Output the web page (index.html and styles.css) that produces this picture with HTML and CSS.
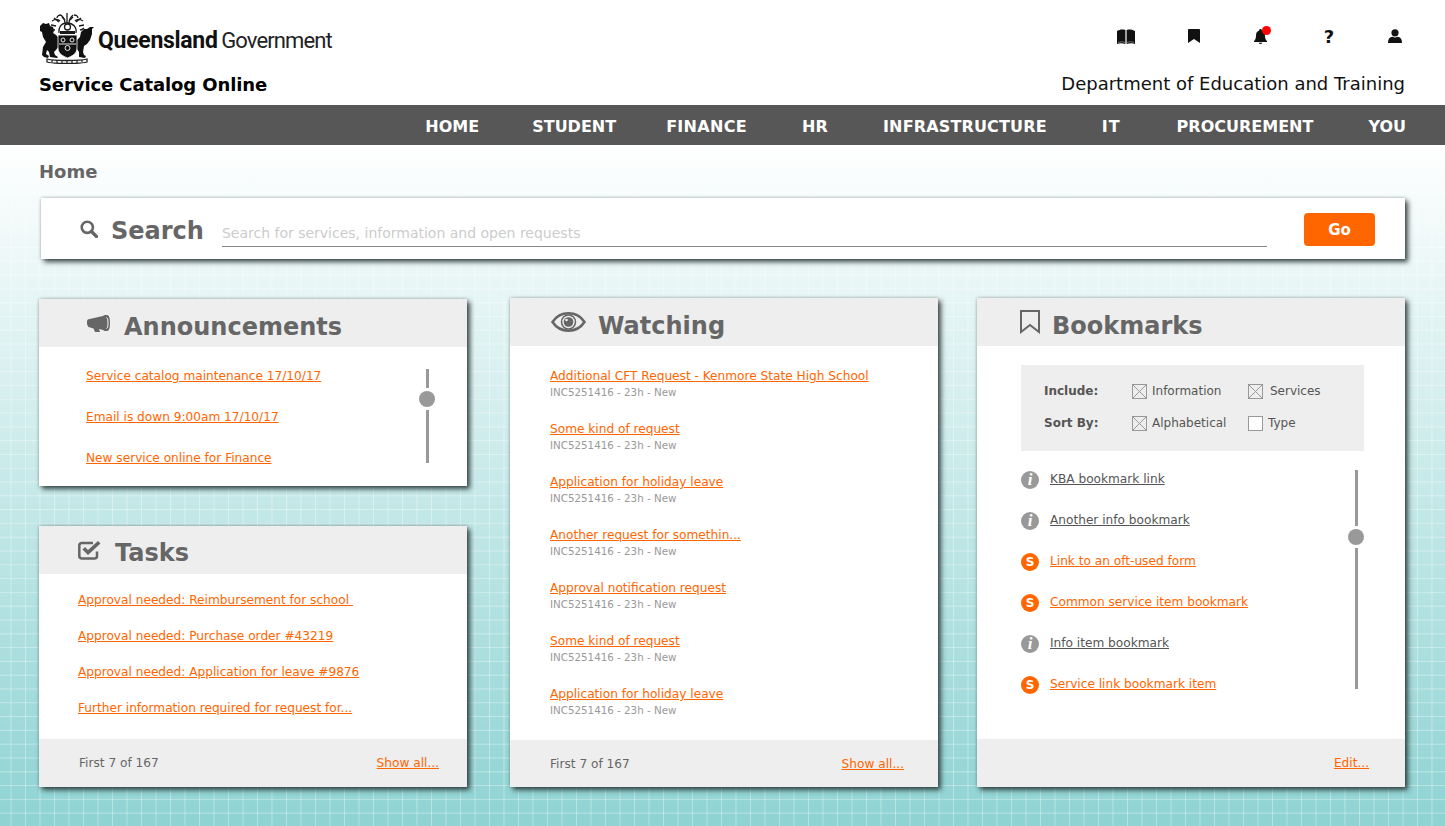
FILE: index.html
```html
<!DOCTYPE html>
<html lang="en">
<head>
    <meta charset="UTF-8">
    <title>Service Catalog Online</title>
    <link rel="stylesheet" href="styles.css">
</head>
<body>

    <header class="top">
        <div class="top-left">
            <div class="logo">
                <svg class="crest" viewBox="0 0 54 51" width="54" height="51">
                    <!-- supporters -->
                    <path fill="#111" d="M0 13l3-3 3 1 3-1 1 3 3 1 1 4-1 2 3 2 3 3v8l-3 4-2 2 1 3 3 2-1 1-7-1-1-5-2-2-1 4 3 2-1 2-4-1-2-2 1-8 3-5-3-5-1-5-2-1z"/>
                    <path fill="#111" d="M54 14l-2 2 0 5-2 6-3 4-3 2-1 6 1 3 2 1-1 2-6-1 0-5-2-3 0-9 3-3 1-5 3-3 3 0 3-2z"/>
                    <!-- shield -->
                    <path fill="#111" stroke="#fff" stroke-width=".8" d="M18 22h19v13c0 6-5 8-9.500 10C23 43 18 41 18 35z"/>
                    <g fill="none" stroke="#fff" stroke-width=".9">
                        <circle cx="23" cy="27" r="2"/><circle cx="32" cy="27" r="2"/><circle cx="27.500" cy="35" r="2.500"/>
                        <path d="M19 31h17"/>
                    </g>
                    <!-- crest and mantling -->
                    <g fill="none" stroke="#1a1a1a" stroke-width="1.300">
                        <path d="M19 20c-1-5 2-10 8-10s10 4 9 10"/>
                        <path d="M27 0v10M21 2c2 2 4 4 4 8M33 2c-2 2-4 4-4 8"/>
                        <path d="M19 9l-5-4M16 13l-5-1M12 8c3-2 6-2 8 0M36 9l5-4M39 13l5-1M43 8c-3-2-6-2-8 0"/>
                        <path d="M17 5c0-2 2-3 4-3M38 5c0-2-2-3-4-3M15 17c-2 0-3-1-4-2M40 17c2 0 3-1 4-2"/>
                        <circle cx="27.500" cy="14" r="3"/>
                        <path d="M22 4l3 3M33 4l-3 3"/>
                    </g>
                    <path fill="#1a1a1a" d="M20 18h15v3H20z"/>
                    <!-- motto ribbon -->
                    <path fill="none" stroke="#222" stroke-width="1.300" d="M7 46c7 2 33 2 40 0v3c-7 2-33 2-40 0z"/>
                    <path stroke="#222" stroke-width="1.200" d="M12 47v2M17 47v3M22 48v2M27 48v2M32 48v2M37 47v3M42 47v2"/>
                </svg>
                <span class="logo-text"><b>Queensland</b> <span>Government</span></span>
            </div>
            <div class="site-name">Service Catalog Online</div>
        </div>
        <div class="top-right">
            <div class="top-icons">
                <a class="top-icon book" href="#">
                    <svg viewBox="0 0 18 15" width="18" height="15"><path d="M0 2c2-1 5-2 8.400-1v14c-3-1-6-1-8.400 0zM9.600 1c3.400-1 6.400 0 8.400 1v13c-2.400-1-5.400-1-8.400 0z" fill="#111"/><path d="M1 13.500c2-1 5-1 7 0M10 13.500c2-1 5-1 7 0" stroke="#999" stroke-width=".7" fill="none"/></svg>
                </a>
                <a class="top-icon" href="#">
                    <svg viewBox="0 0 12 14" width="12" height="14"><path d="M0 1a1 1 0 0 1 1-1h10a1 1 0 0 1 1 1v13L6 10l-6 4z" fill="#111"/></svg>
                </a>
                <a class="top-icon bell" href="#">
                    <svg viewBox="0 0 13 15" width="13" height="15"><path d="M6.500 0a1.200 1.200 0 0 1 1.200 1.500C10 2 11 4 11 6.500c0 3 .8 4.500 2 5.500v1H0v-1c1.200-1 2-2.500 2-5.500C2 4 3 2 5.300 1.500A1.200 1.200 0 0 1 6.500 0zM4.800 13.800h3.400a1.700 1.200 0 0 1-3.400 0z" fill="#111"/></svg>
                    <span class="bell-dot"></span>
                </a>
                <a class="top-icon help" href="#">?</a>
                <a class="top-icon user" href="#">
                    <svg viewBox="0 0 14 14" width="14" height="14"><circle cx="7" cy="3.800" r="3.600" fill="#111"/><path d="M0 14c0-4 1.500-6 4.500-6.200 1.500 1 3.500 1 5 0C12.500 8 14 10 14 14z" fill="#111"/></svg>
                </a>
            </div>
            <div class="dept">Department of Education and Training</div>
        </div>
    </header>

    <nav class="main-nav">
        <a class="nav-home" href="#">HOME</a>
        <a href="#">STUDENT</a>
        <a class="nav-fin" href="#">FINANCE</a>
        <a class="nav-wide" href="#">HR</a>
        <a class="nav-wide" href="#">INFRASTRUCTURE</a>
        <a class="nav-it" href="#">IT</a>
        <a href="#">PROCUREMENT</a>
        <a href="#">YOU</a>
    </nav>

    <main class="page">
        <div class="crumb">Home</div>

        <section class="search-box">
            <svg class="search-icon" viewBox="0 0 18 18" width="18" height="18"><circle cx="7.300" cy="7.300" r="5.600" fill="none" stroke="#666" stroke-width="2.600"/><path d="M11.500 11.500l5 5" stroke="#666" stroke-width="3.200" stroke-linecap="round"/></svg>
            <h2 class="search-title">Search</h2>
            <input class="search-input" type="text" placeholder="Search for services, information and open requests">
            <button class="go-btn">Go</button>
        </section>

        <div class="columns">
            <div class="col col-left">
                <section class="card card-announce">
                    <div class="card-head head-announce">
                        <svg viewBox="0 0 23 17" width="23" height="17"><path d="M0 6.500c0-1 .5-2 1.500-2.200L16 1c2-1.500 3-1 4-1 2 0 3 3.500 3 8s-1 8-3 8c-1 0-2 .5-4-1l-4-1 1 3-1 1-4-1-1.500-3.500-5-1.500C.5 10.500 0 9.500 0 8.500z" fill="#666"/><path d="M19.500 2.500c1.200.5 1.500 3 1.500 5.500s-.3 5-1.500 5.500" stroke="#fff" stroke-width="1" fill="none"/></svg>
                        <h2>Announcements</h2>
                    </div>
                    <div class="announce-body">
                        <ul class="links">
                            <li><a href="#">Service catalog maintenance 17/10/17</a></li>
                            <li><a href="#">Email is down 9:00am 17/10/17</a></li>
                            <li><a href="#">New service online for Finance</a></li>
                        </ul>
                        <div class="slider slider-announce"><span></span><i></i><span></span></div>
                    </div>
                </section>

                <section class="card card-tasks">
                    <div class="card-head head-tasks">
                        <svg viewBox="0 0 23 20" width="23" height="20"><path d="M19 11.500V16a2.500 2.500 0 0 1-2.500 2.500h-13A2.500 2.500 0 0 1 1.300 16V5.500A2.500 2.500 0 0 1 3.500 3H15" fill="none" stroke="#666" stroke-width="2.500"/><path d="M4.500 9.500L10 15 22.500 3.500 20 1 10 10 7 7z" fill="#666"/></svg>
                        <h2>Tasks</h2>
                    </div>
                    <ul class="links task-links">
                        <li><a href="#">Approval needed: Reimbursement for school&nbsp;</a></li>
                        <li><a href="#">Approval needed: Purchase order #43219</a></li>
                        <li><a href="#">Approval needed: Application for leave #9876</a></li>
                        <li><a href="#">Further information required for request for...</a></li>
                    </ul>
                    <div class="card-foot">
                        <span>First 7 of 167</span>
                        <a href="#">Show all...</a>
                    </div>
                </section>
            </div>

            <section class="card col col-mid">
                <div class="card-head head-watch">
                    <svg viewBox="0 0 35 20" width="35" height="20"><path d="M1.500 10C5.500 4 11 1.300 17.500 1.300S29.500 4 33.500 10c-4 6-9.500 8.700-16 8.700S5.500 16 1.500 10z" fill="none" stroke="#666" stroke-width="2.600"/><circle cx="17.500" cy="10" r="7" fill="none" stroke="#666" stroke-width="1.500"/><circle cx="17.500" cy="10" r="4.800" fill="#666"/><circle cx="15.500" cy="8" r="1.300" fill="#eee"/></svg>
                    <h2>Watching</h2>
                </div>
                <ul class="watch-list">
                    <li><a href="#">Additional CFT Request - Kenmore State High School</a><small>INC5251416 - 23h - New</small></li>
                    <li><a href="#">Some kind of request</a><small>INC5251416 - 23h - New</small></li>
                    <li><a href="#">Application for holiday leave</a><small>INC5251416 - 23h - New</small></li>
                    <li><a href="#">Another request for somethin...</a><small>INC5251416 - 23h - New</small></li>
                    <li><a href="#">Approval notification request</a><small>INC5251416 - 23h - New</small></li>
                    <li><a href="#">Some kind of request</a><small>INC5251416 - 23h - New</small></li>
                    <li><a href="#">Application for holiday leave</a><small>INC5251416 - 23h - New</small></li>
                </ul>
                <div class="card-foot foot-mid">
                    <span>First 7 of 167</span>
                    <a href="#">Show all...</a>
                </div>
            </section>

            <section class="card col col-right">
                <div class="card-head head-book">
                    <svg viewBox="0 0 20 24" width="20" height="24"><path d="M1 1h18v21l-9-7-9 7z" fill="none" stroke="#666" stroke-width="2"/></svg>
                    <h2>Bookmarks</h2>
                </div>
                <div class="filter">
                    <div class="filter-row">
                        <b>Include:</b>
                        <label class="check on check-a">Information</label>
                        <label class="check on check-s">Services</label>
                    </div>
                    <div class="filter-row">
                        <b>Sort By:</b>
                        <label class="check on check-a">Alphabetical</label>
                        <label class="check">Type</label>
                    </div>
                </div>
                <div class="book-body">
                    <ul class="book-list">
                        <li><span class="badge info">i</span><a class="dark" href="#">KBA bookmark link</a></li>
                        <li><span class="badge info">i</span><a class="dark" href="#">Another info bookmark</a></li>
                        <li><span class="badge svc">S</span><a href="#">Link to an oft-used form</a></li>
                        <li><span class="badge svc">S</span><a href="#">Common service item bookmark</a></li>
                        <li><span class="badge info">i</span><a class="dark" href="#">Info item bookmark</a></li>
                        <li><span class="badge svc">S</span><a href="#">Service link bookmark item</a></li>
                    </ul>
                    <div class="slider slider-book"><span></span><i></i><span></span></div>
                </div>
                <div class="card-foot foot-end">
                    <a href="#">Edit...</a>
                </div>
            </section>
        </div>
    </main>

</body>
</html>
```

FILE: styles.css
```css
* {
    box-sizing: border-box;
}
html, body {
    margin: 0;
    height: 826px;
    overflow: hidden;
}
body {
    font-family: 'DejaVu Sans', Verdana, sans-serif;
    font-size: 12.15px;
    color: #666;
    background-color: #fff;
}
a {
    color: #ff6600;
}
h2 {
    margin: 0;
}
ul {
    list-style-type: none;
    margin: 0;
    padding: 0;
}

/* top header */
.top {
    height: 105px;
    display: flex;
    justify-content: space-between;
    padding: 13px 40px 0 39px;
}
.logo {
    display: flex;
    align-items: center;
    height: 51px;
    margin-left: 1px;
}
.logo-text {
    font-family: Roboto, sans-serif;
    font-size: 23px;
    word-spacing: -2px;
    color: #222;
    margin: 4px 0 0 4px;
}
.logo-text b {
    color: #111;
    letter-spacing: -0.3px;
}
.logo-text span {
    font-size: 22px;
    letter-spacing: -0.9px;
}
.site-name {
    margin-top: 10px;
    font-size: 18px;
    font-weight: bold;
    letter-spacing: -0.1px;
    color: #000;
}
.top-right {
    text-align: right;
}
.top-icons {
    display: flex;
    justify-content: flex-end;
    align-items: center;
    gap: 54px;
    height: 46px;
    margin-top: 13px;
    padding-bottom: 26px;
}
.top-icon {
    display: flex;
    justify-content: center;
    align-items: center;
    color: #111;
    text-decoration: none;
    position: relative;
}
.help {
    width: 10px;
    margin-left: -1px;
    font-size: 18px;
    font-weight: bold;
}
.book {
    margin-right: -1px;
}
.bell {
    margin-right: 4px;
}
.user {
    margin-right: 3px;
}
.bell-dot {
    position: absolute;
    top: -3px;
    left: 8px;
    width: 9px;
    height: 9px;
    border-radius: 50%;
    background-color: #f00;
}
.dept {
    font-size: 18px;
    color: #111;
    margin-top: 1px;
}

/* nav bar */
.main-nav {
    height: 40px;
    padding: 3px 39px 0 0;
    background-color: #575757;
    display: flex;
    justify-content: flex-end;
    align-items: center;
    gap: 55px;
}
.main-nav a {
    color: #fff;
    font-size: 16px;
    font-weight: bold;
    text-decoration: none;
}
.main-nav .nav-home {
    margin-right: -2px;
}
.main-nav .nav-fin {
    letter-spacing: 0.3px;
    margin-left: -5px;
}
.main-nav .nav-wide {
    letter-spacing: 0.15px;
}
.main-nav .nav-it {
    letter-spacing: 1px;
    padding-right: 1px;
}

/* page background */
.page {
    height: 681px;
    padding: 0 40px 0 39px;
    background-color: #8fd3d3;
    background-image:
        linear-gradient(to bottom, #fff 0%, rgba(255, 255, 255, 0) 100%),
        linear-gradient(to right, rgba(255, 255, 255, 0.35) 1px, transparent 1px),
        linear-gradient(to bottom, rgba(255, 255, 255, 0.35) 1px, transparent 1px);
    background-size: 100% 100%, 14.5px 100%, 100% 13.8px;
    background-position: 0 0, 10.5px 0, 0 5.4px;
}
.crumb {
    font-size: 18px;
    font-weight: bold;
    color: #666;
    padding-top: 16px;
    height: 53px;
}
.card, .search-box {
    background-color: #fff;
    box-shadow: 3px 3px 5px rgba(30, 45, 45, 0.85), 0 0 3px rgba(0, 0, 0, 0.25);
}

/* search */
.search-box {
    height: 61px;
    margin-left: 2px;
    display: flex;
    align-items: center;
    padding: 0 30px 0 39px;
}
.search-title {
    font-size: 24px;
    color: #666;
    margin-left: 13px;
    padding-top: 5px;
}
.search-input {
    flex: 1;
    height: 28px;
    margin: 8px 37px 0 18px;
    border: none;
    border-bottom: 1px solid #888;
    outline: none;
    padding: 2px 0 0;
    font-family: inherit;
    font-size: 14px;
}
.search-input::placeholder {
    color: #ccc;
}
.go-btn {
    width: 71px;
    height: 33px;
    margin-top: 2px;
    border: none;
    border-radius: 4px;
    background-color: #ff6600;
    color: #fff;
    font-family: inherit;
    font-size: 15px;
    font-weight: bold;
}

/* columns */
.columns {
    display: flex;
    margin-top: 39px;
    height: 489px;
}
.col {
    width: 428px;
    flex: none;
}
.col-left {
    padding-top: 1px;
    display: flex;
    flex-direction: column;
    gap: 40px;
}
.col-mid {
    margin-left: 43px;
}
.col-right {
    margin-left: 39px;
}
.card {
    display: flex;
    flex-direction: column;
}
.card-head {
    height: 48px;
    flex: none;
    background-color: #eee;
    display: flex;
    align-items: center;
}
.card-head h2 {
    font-size: 24px;
    color: #666;
    padding-top: 7px;
}
.card-foot {
    height: 48px;
    margin-top: auto;
    padding: 0 28px 0 40px;
    background-color: #eee;
    display: flex;
    justify-content: space-between;
    align-items: center;
}
.foot-mid {
    padding-right: 34px;
}
.foot-end {
    justify-content: flex-end;
    padding-right: 36px;
}

.head-announce { padding-left: 48px; }
.head-announce h2 { margin-left: 14px; }
.head-tasks { padding-left: 39px; }
.head-tasks h2 { margin-left: 14px; padding-top: 5px; }
.head-watch { padding-left: 41px; }
.head-watch h2 { margin-left: 12px; }
.head-book { padding-left: 43px; }
.head-book h2 { margin-left: 12px; }

/* announcements */
.card-announce {
    height: 187px;
}
.announce-body {
    display: flex;
    justify-content: space-between;
    padding: 22px 32px 0 47px;
}
.links li {
    height: 41px;
}
.card-tasks {
    height: 261px;
}
.task-links {
    padding: 19px 0 0 39px;
}
.task-links li {
    height: 36px;
}

/* sliders */
.slider {
    width: 16px;
    display: flex;
    flex-direction: column;
    align-items: center;
}
.slider span {
    width: 3px;
    background-color: #999;
}
.slider i {
    width: 16px;
    height: 16px;
    margin: 3px 0;
    border-radius: 50%;
    background-color: #999;
}
.slider-announce span:first-child { height: 19px; }
.slider-announce span:last-child { height: 53px; }
.slider-book {
    margin-top: -2px;
}
.slider-book span:first-child { height: 56px; }
.slider-book span:last-child { height: 141px; }

/* watching */
.watch-list {
    padding: 23px 0 0 40px;
}
.watch-list li {
    height: 53px;
}
.watch-list small {
    display: block;
    font-size: 10.3px;
    color: #999;
    margin-top: 3px;
}

/* bookmarks */
.filter {
    margin: 19px 41px 0 44px;
    height: 86px;
    background-color: #eee;
    padding: 10px 0 0 23px;
    font-size: 12px;
}
.filter-row {
    display: flex;
    align-items: center;
    height: 32px;
    color: #555;
}
.filter-row b {
    width: 88px;
}
.check {
    display: flex;
    align-items: center;
    padding-left: 20px;
    position: relative;
}
.check-a {
    width: 116px;
}
.check-s {
    padding-left: 22px;
}
.check::before {
    content: "";
    position: absolute;
    left: 0;
    top: 50%;
    margin-top: -7px;
    width: 13px;
    height: 13px;
    border: 1px solid #999;
    background-color: #fff;
}
.check.on::before {
    background-color: transparent;
    background-image:
        linear-gradient(45deg, transparent 48%, #999 48%, #999 52%, transparent 52%),
        linear-gradient(-45deg, transparent 48%, #999 48%, #999 52%, transparent 52%);
}
.book-body {
    display: flex;
    justify-content: space-between;
    padding: 21px 41px 0 44px;
}
.book-list li {
    height: 41px;
    display: flex;
    align-items: flex-start;
}
.book-list a {
    margin-left: 11px;
}
.book-list a.dark {
    color: #555;
}
.badge {
    width: 18px;
    height: 18px;
    margin-top: -1px;
    border-radius: 50%;
    color: #fff;
    font-size: 12px;
    font-weight: bold;
    display: flex;
    justify-content: center;
    align-items: center;
}
.badge.info {
    background-color: #999;
    font-family: 'Liberation Serif', serif;
    font-style: italic;
    font-size: 17px;
}
.badge.svc {
    background-color: #ff6600;
}
```
